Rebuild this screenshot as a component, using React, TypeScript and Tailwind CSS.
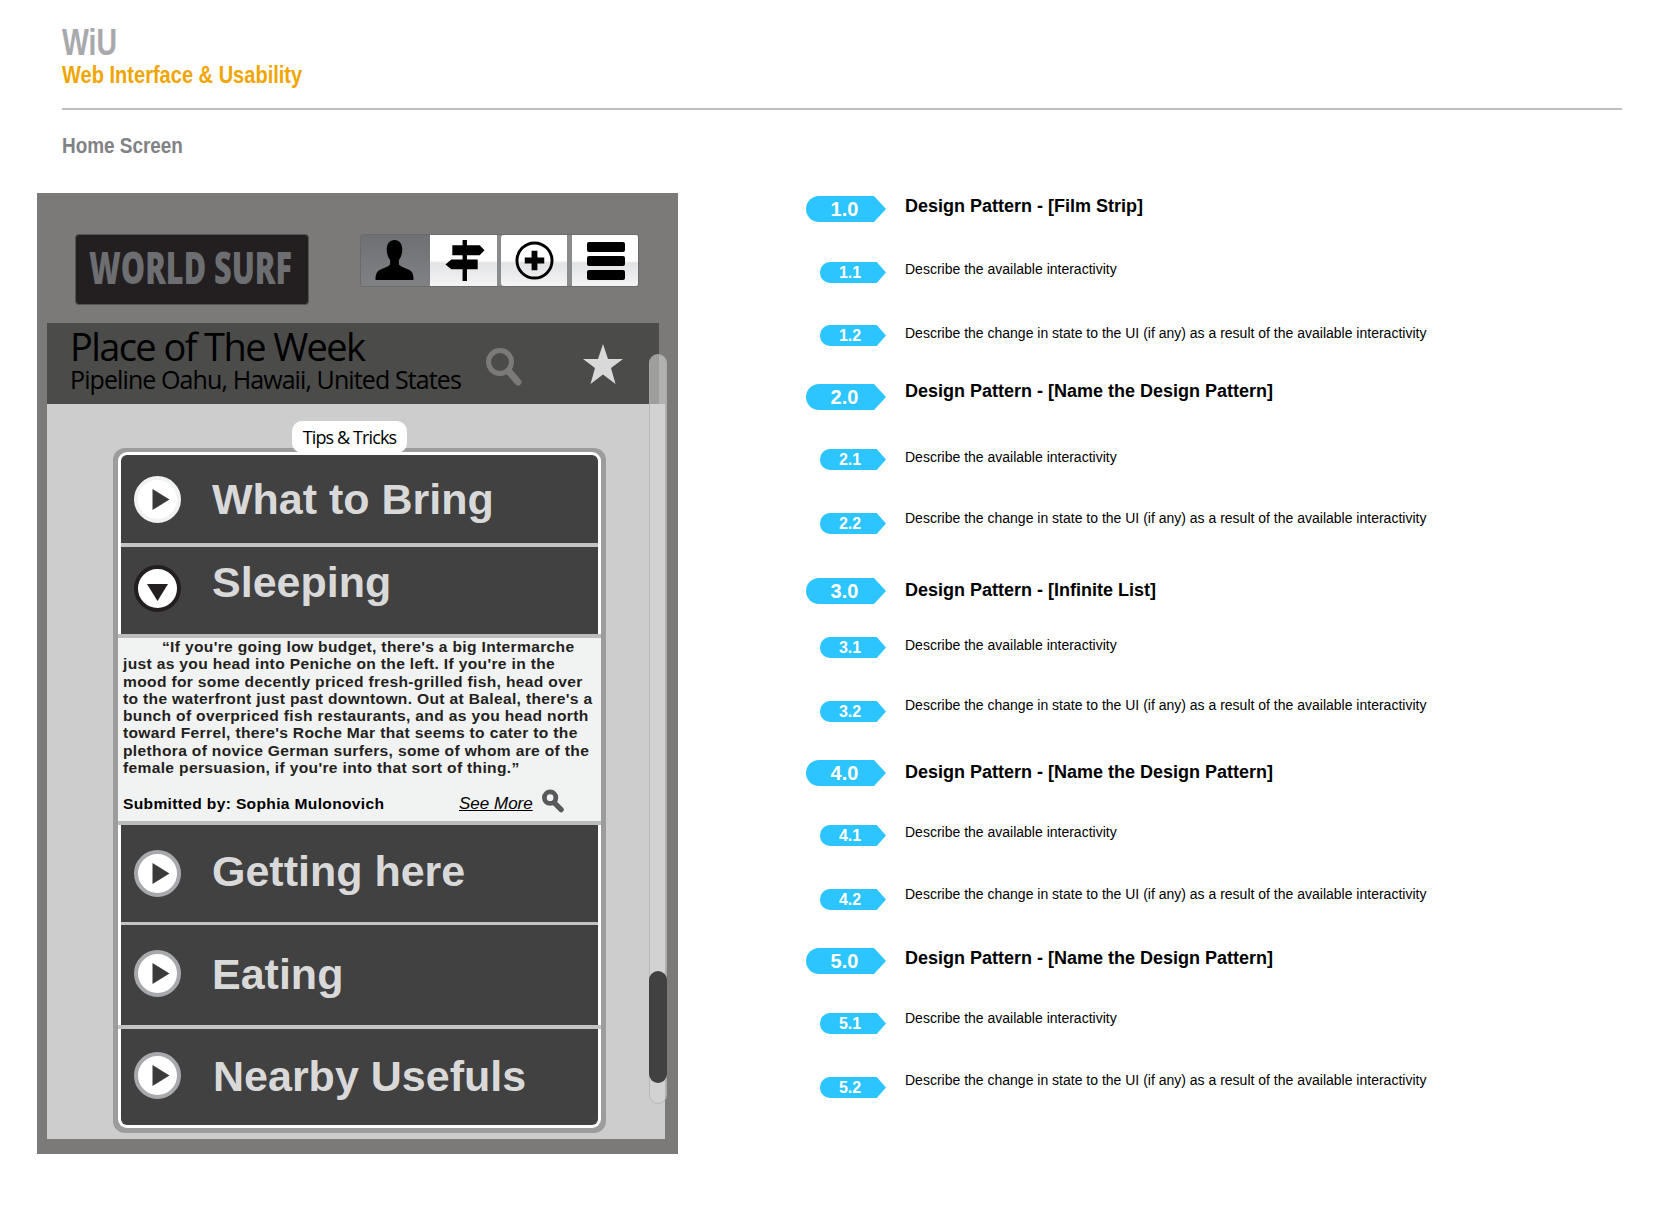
const rows = [
  { label: "What to Bring", open: false, rowCls: "h-[88px]", iconCls: "mt-[21px]", textCls: "mt-[23px] ml-[31px]", ringCls: "text-[#f1f2f2]", dividerCls: "h-[4px] bg-[#c4c4c4]" },
  { label: "Sleeping", open: true, rowCls: "h-[87px]", iconCls: "mt-[18px]", textCls: "mt-[14px] ml-[31px]", ringCls: "text-[#231f20]", dividerCls: "" },
  { label: "Getting here", open: false, rowCls: "h-[97px]", iconCls: "mt-[25px]", textCls: "mt-[25px] ml-[31px]", ringCls: "text-[#a7a9ac]", dividerCls: "h-[3px] bg-[#c4c4c4]" },
  { label: "Eating", open: false, rowCls: "h-[100px]", iconCls: "mt-[25px]", textCls: "mt-[28px] ml-[31px]", ringCls: "text-[#a7a9ac]", dividerCls: "h-[4px] bg-[#c4c4c4] -mx-[3px]" },
  { label: "Nearby Usefuls", open: false, rowCls: "h-[96px]", iconCls: "mt-[23px]", textCls: "mt-[26px] ml-[32px]", ringCls: "text-[#a7a9ac]", dividerCls: "" },
];

const notes = [
  { num: "1.0", big: true, text: "Design Pattern - [Film Strip]", rowCls: "mt-0", textCls: "-mt-[2px]" },
  { num: "1.1", big: false, text: "Describe the available interactivity", rowCls: "mt-[40px]", textCls: "-mt-[3px]" },
  { num: "1.2", big: false, text: "Describe the change in state to the UI (if any) as a result of the available interactivity", rowCls: "mt-[42px]", textCls: "-mt-[2px]" },
  { num: "2.0", big: true, text: "Design Pattern - [Name the Design Pattern]", rowCls: "mt-[38px]", textCls: "-mt-[5px]" },
  { num: "2.1", big: false, text: "Describe the available interactivity", rowCls: "mt-[39px]", textCls: "-mt-[2px]" },
  { num: "2.2", big: false, text: "Describe the change in state to the UI (if any) as a result of the available interactivity", rowCls: "mt-[43px]", textCls: "-mt-[5px]" },
  { num: "3.0", big: true, text: "Design Pattern - [Infinite List]", rowCls: "mt-[44px]", textCls: "mt-0" },
  { num: "3.1", big: false, text: "Describe the available interactivity", rowCls: "mt-[33px]", textCls: "-mt-[2px]" },
  { num: "3.2", big: false, text: "Describe the change in state to the UI (if any) as a result of the available interactivity", rowCls: "mt-[43px]", textCls: "-mt-[6px]" },
  { num: "4.0", big: true, text: "Design Pattern - [Name the Design Pattern]", rowCls: "mt-[38px]", textCls: "mt-0" },
  { num: "4.1", big: false, text: "Describe the available interactivity", rowCls: "mt-[39px]", textCls: "-mt-[3px]" },
  { num: "4.2", big: false, text: "Describe the change in state to the UI (if any) as a result of the available interactivity", rowCls: "mt-[43px]", textCls: "-mt-[5px]" },
  { num: "5.0", big: true, text: "Design Pattern - [Name the Design Pattern]", rowCls: "mt-[38px]", textCls: "-mt-[2px]" },
  { num: "5.1", big: false, text: "Describe the available interactivity", rowCls: "mt-[39px]", textCls: "-mt-[5px]" },
  { num: "5.2", big: false, text: "Describe the change in state to the UI (if any) as a result of the available interactivity", rowCls: "mt-[43px]", textCls: "-mt-[7px]" },
];

const quote = [
  "“If you're going low budget, there's a big Intermarche",
  "just as you head into Peniche on the left. If you're in the",
  "mood for some decently priced fresh-grilled fish, head over",
  "to the waterfront just past downtown. Out at Baleal, there's a",
  "bunch of overpriced fish restaurants, and as you head north",
  "toward Ferrel, there's Roche Mar that seems to cater to the",
  "plethora of novice German surfers, some of whom are of the",
  "female persuasion, if you're into that sort of thing.”",
];

const PersonIcon = () => (
  <svg viewBox="0 0 40 42" className="w-[39px] h-[41px]" fill="#000">
    <path d="M20 0c-5 0-8 4-8 10 0 4 1.500 8 3.500 10.500V25c-1.500 2.500-9 4-12 6.500C1 33.500.5 37 .5 41h39c0-4-.5-7.500-3-9.500-3-2.500-10.500-4-12-6.500v-4.500C26.500 18 28 14 28 10c0-6-3-10-8-10z" />
  </svg>
);

const SignIcon = () => (
  <svg viewBox="0 0 40 42" className="w-[40px] h-[41px]" fill="#000">
    <path d="M17.500 0h4.500v5.500h13L40 10.500l-5 5H22V20h11v10H22v12h-4.500V30H6L0 25l6-5h11.500v-4.500H7v-10h10.500z" />
  </svg>
);

const PlusIcon = () => (
  <svg viewBox="0 0 40 40" className="w-[39px] h-[39px]">
    <circle cx="20" cy="20" r="18" fill="none" stroke="#000" strokeWidth="3" />
    <path d="M17 10h6v7h7v6h-7v7h-6v-7h-7v-6h7z" fill="#000" />
  </svg>
);

const MenuIcon = () => (
  <div className="flex flex-col gap-[4px] w-[38px]">
    <div className="h-[10px] rounded-[2px] bg-black" />
    <div className="h-[10px] rounded-[2px] bg-black" />
    <div className="h-[10px] rounded-[2px] bg-black" />
  </div>
);

const SearchIcon = () => (
  <svg viewBox="0 0 36 38" className="mt-[25px] w-[36px] h-[38px]" fill="none">
    <circle cx="14" cy="14" r="11.500" stroke="#7b7a78" strokeWidth="5" />
    <path d="M22.500 23L32 34" stroke="#7b7a78" strokeWidth="7" strokeLinecap="round" />
  </svg>
);

const KeyIcon = () => (
  <svg viewBox="0 0 23 24" className="ml-[9px] -mt-[3px] w-[22px] h-[24px]" fill="none">
    <circle cx="8.500" cy="8.500" r="6" stroke="#58595b" strokeWidth="5" />
    <path d="M13 14L20 21" stroke="#58595b" strokeWidth="5.500" strokeLinecap="round" />
  </svg>
);

const RowIcon = ({ open, ringCls }: { open: boolean; ringCls: string }) => (
  <svg viewBox="0 0 47 47" className={`w-[47px] h-[47px] ${ringCls}`}>
    <circle cx="23.500" cy="23.500" r="21.500" fill="#fff" stroke="currentColor" strokeWidth="4" />
    {open ? <path d="M13 19h21L23.500 36z" fill="#231f20" /> : <path d="M18.500 13l17 10.500-17 10.500z" fill="#3a3a3a" />}
  </svg>
);

const Badge = ({ num, big }: { num: string; big: boolean }) =>
  big ? (
    <div className="w-[80px] h-[26px] bg-[#2dc5ff] rounded-l-[13px] [clip-path:polygon(0_0,85%_0,100%_50%,85%_100%,0_100%)] flex items-center justify-center pr-[3px] text-white text-[20px] font-bold leading-none">
      {num}
    </div>
  ) : (
    <div className="ml-[14px] w-[66px] h-[21px] bg-[#2dc5ff] rounded-l-[10px] [clip-path:polygon(0_0,86%_0,100%_50%,86%_100%,0_100%)] flex items-center justify-center pr-[6px] text-white text-[16px] font-bold leading-none">
      {num}
    </div>
  );

export default function App() {
  return (
    <div className="relative w-[1669px] h-[1222px] bg-white overflow-hidden font-['Liberation_Sans',sans-serif]">
      <header className="pl-[62px] pr-[47px] pt-[25px]">
        <div className="h-[36px] font-bold text-[36px] leading-[36px] text-[#a7a9ac] origin-left scale-x-[0.79]">WiU</div>
        <div className="mt-[1px] h-[26px] font-bold text-[24px] leading-[26px] text-[#f0a500] origin-left scale-x-[0.835] whitespace-nowrap">Web Interface &amp; Usability</div>
        <div className="mt-[20px] h-[2px] bg-[#bcbec0]" />
        <div className="mt-[24px] h-[24px] font-bold text-[22px] leading-[24px] text-[#808285] origin-left scale-x-[0.86] whitespace-nowrap">Home Screen</div>
      </header>

      <main className="flex mt-[35px] pl-[37px]">
        <section className="relative w-[641px] h-[961px] bg-[#7b7a78]">
          <div className="flex h-[130px] pt-[41px] pl-[38px]">
            <div className="w-[234px] h-[71px] rounded-[4px] bg-[#231f20] border border-[#55534f] overflow-hidden pl-[13px] pt-[4px]">
              <div className="font-['Open_Sans',sans-serif] font-extrabold text-[44px] leading-[56px] text-[#6d6e71] origin-left scale-x-[0.695] whitespace-nowrap">WORLD SURF</div>
            </div>
            <div className="ml-[51px] w-[279px] h-[53px] flex rounded-[3px] overflow-hidden border border-[#6b6b6b] bg-[#8a8b8d]">
              <div className="w-[69px] pr-[3px] flex items-center justify-center bg-[linear-gradient(#6e7074,#7f8185)]"><PersonIcon /></div>
              <div className="w-[67px] pl-[3px] flex items-center justify-center bg-[linear-gradient(#fff_50%,#e2e3e5_55%,#f4f4f5)]"><SignIcon /></div>
              <div className="w-[4px]" />
              <div className="w-[66px] rounded-l-[3px] flex items-center justify-center bg-[linear-gradient(#fff_50%,#e2e3e5_55%,#f4f4f5)]"><PlusIcon /></div>
              <div className="w-[5px]" />
              <div className="flex-1 pl-[2px] flex items-center justify-center bg-[linear-gradient(#fff_50%,#e2e3e5_55%,#f4f4f5)]"><MenuIcon /></div>
            </div>
          </div>

          <div className="ml-[10px] w-[612px] h-[81px] bg-[#4b4b4a] flex pl-[23px] font-['Open_Sans',sans-serif] text-black">
            <div className="w-[416px] pt-[3px] whitespace-nowrap">
              <div className="text-[38px] leading-[40px] tracking-[-1.6px]">Place of The Week</div>
              <div className="text-[25px] leading-[26px] tracking-[-0.9px]">Pipeline Oahu, Hawaii, United States</div>
            </div>
            <SearchIcon />
            <svg viewBox="0 0 40 40" className="ml-[61px] mt-[21px] w-[40px] h-[40px]" fill="#d9d9d9">
              <path d="M20 0l5 15h15l-12 9 4.500 16L20 30.500 7.500 40 12 24 0 15h15z" />
            </svg>
          </div>

          <div className="relative ml-[10px] w-[618px] h-[735px] bg-[#cdcdcd] pl-[66px] pt-[44px]">
            <div className="w-[493px] h-[685px] rounded-[12px] bg-[#9c9c9c] px-[5px] pt-[4px] pb-[5px]">
              <div className="h-full rounded-[9px] bg-white p-[3px]">
                <div className="h-full rounded-[6px] bg-[#414141] text-[#d9d9d9] font-bold text-[43px] leading-[43px]">
                  {rows.map((row) => (
                    <div key={row.label}>
                      <div className={`flex ${row.rowCls}`}>
                        <div className={`ml-[13px] ${row.iconCls}`}><RowIcon open={row.open} ringCls={row.ringCls} /></div>
                        <div className={row.textCls}>{row.label}</div>
                      </div>
                      {row.dividerCls && <div className={row.dividerCls} />}
                      {row.open && (
                        <div className="-mx-[3px] border-y-4 border-[#bcbcbc] bg-[#f1f2f2] h-[191px] px-[5px] pt-[1px] text-[14px] leading-[17.300px] tracking-[0.3px] text-[#231f20]">
                          <div className="origin-left scale-x-[1.113]">
                            {quote.map((line, j) => (
                              <div key={j} className={`whitespace-nowrap ${j === 0 ? "pl-[35px]" : ""}`}>{line}</div>
                            ))}
                          </div>
                          <div className="mt-[15px] flex items-start text-black">
                            <span className="w-[336px] pt-[4px]"><span className="inline-block origin-left scale-x-[1.113] whitespace-nowrap">Submitted by: Sophia Mulonovich</span></span>
                            <span className="pt-[3px] font-normal italic text-[17px] leading-[18px] tracking-normal underline whitespace-nowrap">See More</span>
                            <KeyIcon />
                          </div>
                        </div>
                      )}
                    </div>
                  ))}
                </div>
              </div>
            </div>
            <div className="absolute left-[245px] top-[17px] w-[115px] h-[32px] rounded-[10px] bg-white flex items-center justify-center font-['Open_Sans',sans-serif] text-[18px] tracking-[-0.9px] text-black">Tips &amp; Tricks</div>
          </div>

          {/* scrollbar sits over the band and the panel */}
          <div className="absolute left-[612px] top-[161px] w-[18px] h-[750px] rounded-[9px] bg-[#d6d6d6]/60 border border-[#a9a9a9]/60">
            <div className="absolute left-[-1px] top-[616px] w-[18px] h-[112px] rounded-[9px] bg-[#414141]" />
          </div>
        </section>

        <section className="ml-[128px] pt-[3px]">
          {notes.map((note) => (
            <div key={note.num} className={`flex items-start ${note.rowCls}`}>
              <div className="w-[99px] shrink-0"><Badge num={note.num} big={note.big} /></div>
              <div className={note.big ? `font-bold text-[18px] leading-[24px] whitespace-nowrap ${note.textCls}` : `text-[14px] leading-[20px] whitespace-nowrap ${note.textCls}`}>{note.text}</div>
            </div>
          ))}
        </section>
      </main>
    </div>
  );
}
